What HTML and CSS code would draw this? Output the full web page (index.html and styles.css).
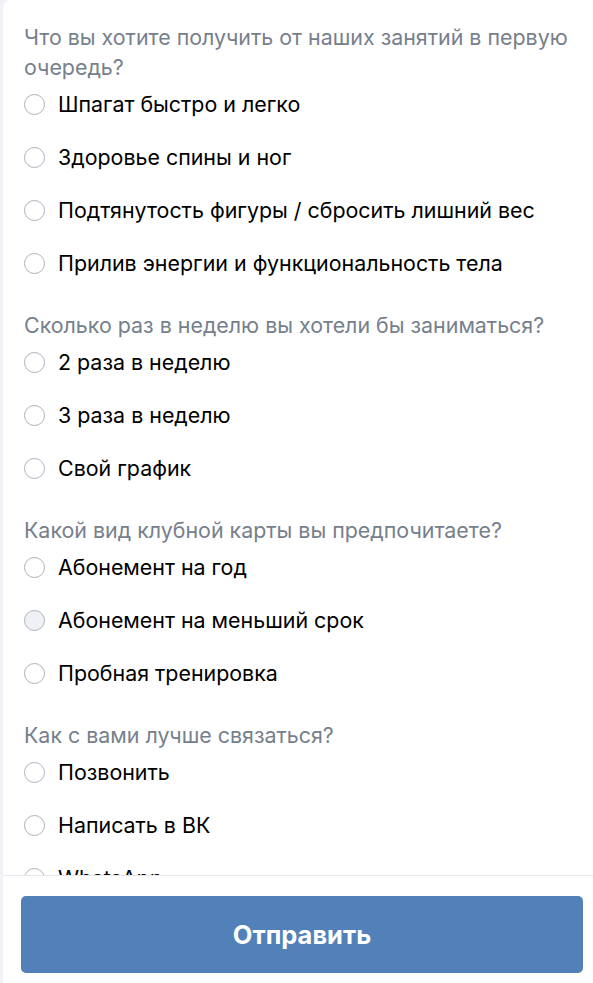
FILE: index.html
```html
<!DOCTYPE html>
<html lang="ru">
<head>
<meta charset="utf-8">
<title>Анкета</title>
<link rel="stylesheet" href="styles.css">
</head>
<body>
<div class="app">
  <main class="content">
    <section class="group">
      <div class="question">Что вы хотите получить от наших занятий в первую очередь?</div>
      <label class="option"><span class="radio"></span><span class="label">Шпагат быстро и легко</span></label>
      <label class="option"><span class="radio"></span><span class="label">Здоровье спины и ног</span></label>
      <label class="option"><span class="radio"></span><span class="label">Подтянутость фигуры / сбросить лишний вес</span></label>
      <label class="option"><span class="radio"></span><span class="label">Прилив энергии и функциональность тела</span></label>
    </section>
    <section class="group">
      <div class="question">Сколько раз в неделю вы хотели бы заниматься?</div>
      <label class="option"><span class="radio"></span><span class="label">2 раза в неделю</span></label>
      <label class="option"><span class="radio"></span><span class="label">3 раза в неделю</span></label>
      <label class="option"><span class="radio"></span><span class="label">Свой график</span></label>
    </section>
    <section class="group">
      <div class="question">Какой вид клубной карты вы предпочитаете?</div>
      <label class="option"><span class="radio"></span><span class="label">Абонемент на год</span></label>
      <label class="option"><span class="radio radio-hover"></span><span class="label">Абонемент на меньший срок</span></label>
      <label class="option"><span class="radio"></span><span class="label">Пробная тренировка</span></label>
    </section>
    <section class="group">
      <div class="question">Как с вами лучше связаться?</div>
      <label class="option"><span class="radio"></span><span class="label">Позвонить</span></label>
      <label class="option"><span class="radio"></span><span class="label">Написать в ВК</span></label>
      <label class="option"><span class="radio"></span><span class="label">WhatsApp</span></label>
    </section>
  </main>
  <footer class="footer">
    <button class="submit" type="button">Отправить</button>
  </footer>
</div>
</body>
</html>
```

FILE: styles.css
```css
html, body {
  margin: 0;
  padding: 0;
  height: 100%;
}

body {
  background: #f0f2f5;
  font-family: Inter, "Liberation Sans", Arial, sans-serif;
  -webkit-font-smoothing: antialiased;
}

.app {
  height: 100vh;
  display: flex;
  flex-direction: column;
  margin-left: 3px;
}

.content {
  flex: 1;
  overflow: hidden;
  background: #ffffff;
  border-top-left-radius: 8px;
  padding: 22px 18px 0 21px;
  display: flex;
  flex-direction: column;
  gap: 25px;
}

.group {
  display: flex;
  flex-direction: column;
  gap: 9px;
}

.question {
  font-size: 21.4px;
  line-height: 30px;
  color: #76808c;
  margin-bottom: -9px;
}

.option {
  height: 44px;
  display: flex;
  align-items: center;
  gap: 13px;
  flex-shrink: 0;
}

.radio {
  width: 19px;
  height: 19px;
  border: 1.7px solid #a9b2bd;
  border-radius: 50%;
  flex-shrink: 0;
}

.radio-hover {
  background: #f0f1f4;
}

.label {
  font-size: 21.4px;
  color: #000000;
}

.footer {
  background: #ffffff;
  border-top: 1px solid #e7e8ec;
  padding: 20px 10px 10px 18px;
}

.submit {
  display: block;
  width: 100%;
  height: 77px;
  border: none;
  border-radius: 5px;
  background: #5181b8;
  color: #ffffff;
  font-family: Inter, "Liberation Sans", Arial, sans-serif;
  font-weight: bold;
  font-size: 25.5px;
  line-height: 77px;
  padding: 0;
  cursor: pointer;
}
```
